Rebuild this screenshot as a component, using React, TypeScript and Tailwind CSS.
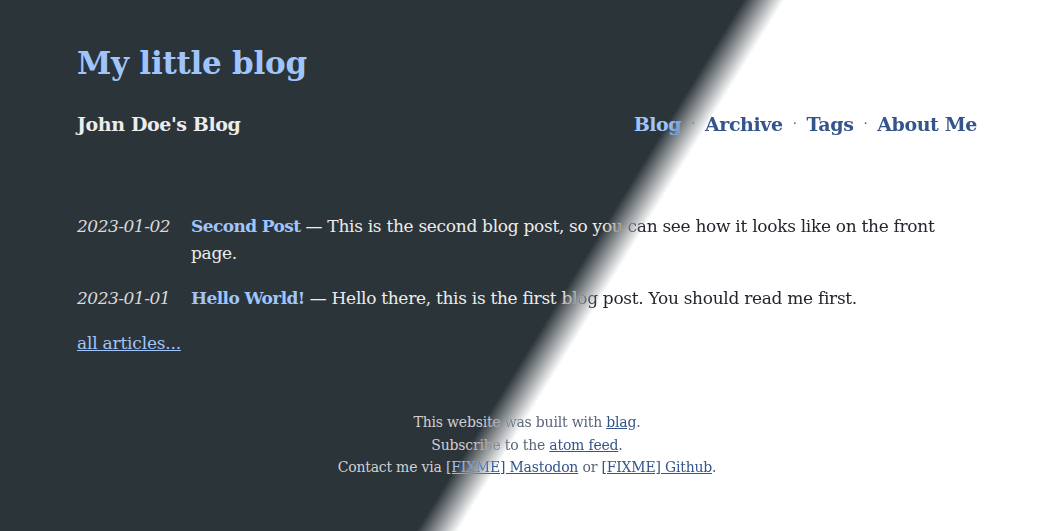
const font = "font-['DejaVu_Serif',serif]";

type Theme = {
  bg: string;
  text: string;
  title: string;
  link: string;
  muted: string;
  date: string;
  dot: string;
  footLink: string;
};

const dark: Theme = {
  bg: "bg-[#2b3439]",
  text: "text-[#ececec]",
  title: "text-[#a0c4fc]",
  link: "text-[#a0c4fc]",
  muted: "text-[#d0d0d0]",
  date: "text-[#dadada]",
  dot: "text-[#bdbdbd]",
  footLink: "text-[#a0c4fc]",
};

const light: Theme = {
  bg: "bg-white",
  text: "text-[#22272e]",
  title: "text-[#34558b]",
  link: "text-[#34558b]",
  muted: "text-[#5b6579]",
  date: "text-[#4a4f57]",
  dot: "text-[#555b66]",
  footLink: "text-[#34558b]",
};

const posts = [
  {
    date: "2023-01-02",
    title: "Second Post",
    text: "This is the second blog post, so you can see how it looks like on the front page.",
  },
  {
    date: "2023-01-01",
    title: "Hello World!",
    text: "Hello there, this is the first blog post. You should read me first.",
  },
];

const nav = ["Blog", "Archive", "Tags", "About Me"];

function Page({ t }: { t: Theme }) {
  return (
    <div className={`min-h-screen w-full ${t.bg} ${font}`}>
      <div className="mx-auto w-[900px] pt-[44px]">
        <h1 className={`text-[31px] font-bold leading-[38px] tracking-[-0.25px] ${t.title}`}>My little blog</h1>

        <header className="mt-[27px] flex items-center justify-between text-[19px] font-bold leading-[30px] tracking-[-0.4px]">
          <span className={t.text}>John Doe's Blog</span>
          <nav className="flex items-center">
            {nav.map((n, i) => (
              <span key={n} className="flex items-center">
                {i > 0 && <span className={`px-[10px] text-[13px] font-normal ${t.dot}`}>·</span>}
                <a className={t.link}>{n}</a>
              </span>
            ))}
          </nav>
        </header>

        <ul className="mt-[74px] flex flex-col gap-[18px] text-[17px] leading-[27px]">
          {posts.map((p) => (
            <li key={p.date} className="flex">
              <span className={`w-[114px] shrink-0 italic tracking-[-0.5px] ${t.date}`}>{p.date}</span>
              <p className={`tracking-[-0.3px] ${t.text}`}>
                <a className={`font-bold tracking-[-0.6px] ${t.link}`}>{p.title}</a> — {p.text}
              </p>
            </li>
          ))}
        </ul>

        <a className={`mt-[18px] block text-[17px] leading-[27px] tracking-[-0.2px] underline ${t.link}`}>
          all articles...
        </a>

        <footer className={`mt-[54px] text-center text-[14px] leading-[22.5px] tracking-[-0.2px] ${t.muted}`}>
          <p>
            This website was built with <a className={`underline ${t.footLink}`}>blag</a>.
          </p>
          <p>
            Subscribe to the <a className={`underline ${t.footLink}`}>atom feed</a>.
          </p>
          <p>
            Contact me via <a className={`underline ${t.footLink}`}>[FIXME] Mastodon</a> or{" "}
            <a className={`underline ${t.footLink}`}>[FIXME] Github</a>.
          </p>
        </footer>
      </div>
    </div>
  );
}

export default function App() {
  return (
    <div className="relative min-h-screen w-full overflow-hidden">
      <Page t={dark} />
      {/* light theme revealed over the dark one, soft diagonal edge */}
      <div
        aria-hidden
        className="absolute inset-0 [mask-image:linear-gradient(121.6deg,transparent_633px,black_668px)] [-webkit-mask-image:linear-gradient(121.6deg,transparent_633px,black_668px)]"
      >
        <Page t={light} />
      </div>
    </div>
  );
}
